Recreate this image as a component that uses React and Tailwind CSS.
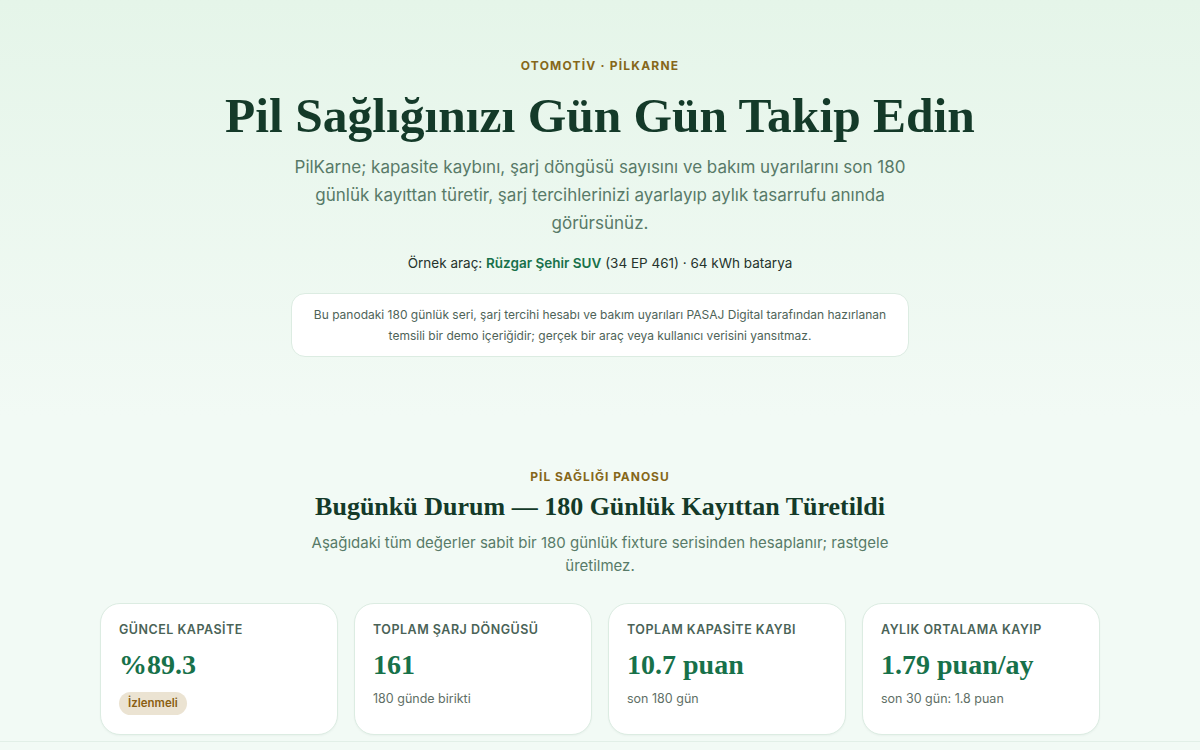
import React from "react";

const serif = { fontFamily: '"Liberation Serif", "DejaVu Serif", serif' };

function Card({ label, value, sub, badge }) {
  return (
    <div className="rounded-[20px] border border-[#dcece2] bg-white px-[18px] pt-[17px] pb-4 h-[132px] shadow-[0_1px_2px_rgba(20,60,40,0.04)]">
      <div className="text-[12.5px] font-semibold tracking-[0.04em] text-[#4a6357] leading-[18px]">{label}</div>
      <div className="mt-[9px] text-[28px] font-bold leading-[34px] text-[#17714a]" style={serif}>{value}</div>
      {badge ? (
        <div className="mt-[10px] inline-flex rounded-full bg-[#ebe3d2] px-[9px] py-[3px] text-[11.5px] font-semibold text-[#8a5f12]">{badge}</div>
      ) : (
        <div className="mt-[8px] text-[12.5px] text-[#5f6f66]">{sub}</div>
      )}
    </div>
  );
}

export default function App() {
  return (
    <div className="min-h-[750px] bg-[#f2faf5] text-[#1d2b24]" style={{ fontFamily: 'Inter, "Noto Sans", sans-serif' }}>
      <section className="bg-gradient-to-b from-[#e5f5e9] to-[#f2faf5] pt-[58px] pb-[58px] flex flex-col items-center text-center">
        <div className="text-[12px] font-bold tracking-[0.1em] text-[#86671a] leading-[16px]">OTOMOTİV · PİLKARNE</div>
        <h1 className="mt-[13px] text-[49.5px] font-bold leading-[58px] text-[#143a29]" style={serif}>Pil Sağlığınızı Gün Gün Takip Edin</h1>
        <p className="mt-[8px] w-[640px] text-[17px] leading-[28px] text-[#587a68]">
          PilKarne; kapasite kaybını, şarj döngüsü sayısını ve bakım uyarılarını son 180 günlük kayıttan türetir, şarj tercihlerinizi ayarlayıp aylık tasarrufu anında görürsünüz.
        </p>
        <div className="mt-[16px] text-[13.5px] text-[#25332c] leading-[20px]">
          Örnek araç: <span className="font-semibold text-[#17714a]">Rüzgar Şehir SUV</span> (34 EP 461) · 64 kWh batarya
        </div>
        <div className="mt-[20px] w-[618px] rounded-[14px] border border-[#dcece2] bg-white px-4 py-[10px] text-[12px] leading-[21px] text-[#4e6358]">
          Bu panodaki 180 günlük seri, şarj tercihi hesabı ve bakım uyarıları PASAJ Digital tarafından hazırlanan temsili bir demo içeriğidir; gerçek bir araç veya kullanıcı verisini yansıtmaz.
        </div>
      </section>
      <section className="pt-[54px] flex flex-col items-center text-center">
        <div className="text-[12px] font-bold tracking-[0.08em] text-[#86671a] leading-[16px]">PİL SAĞLIĞI PANOSU</div>
        <h2 className="mt-[5px] text-[26px] font-bold leading-[34px] text-[#143a29]" style={serif}>Bugünkü Durum — 180 Günlük Kayıttan Türetildi</h2>
        <p className="mt-[7px] w-[600px] text-[15px] leading-[23px] text-[#587a68]">
          Aşağıdaki tüm değerler sabit bir 180 günlük fixture serisinden hesaplanır; rastgele üretilmez.
        </p>
        <div className="mt-[26px] grid w-[1000px] grid-cols-4 gap-4 text-left">
          <Card label="GÜNCEL KAPASİTE" value="%89.3" badge="İzlenmeli" />
          <Card label="TOPLAM ŞARJ DÖNGÜSÜ" value="161" sub="180 günde birikti" />
          <Card label="TOPLAM KAPASİTE KAYBI" value="10.7 puan" sub="son 180 gün" />
          <Card label="AYLIK ORTALAMA KAYIP" value="1.79 puan/ay" sub="son 30 gün: 1.8 puan" />
        </div>
        <div className="mt-[6px] w-full border-t border-[#e2efe7] h-[40px]"></div>
      </section>
    </div>
  );
}
